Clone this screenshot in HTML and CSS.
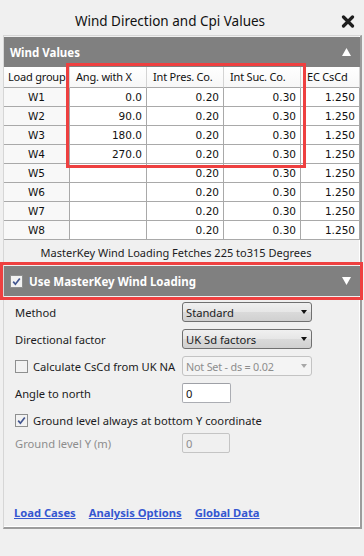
FILE: index.html
```html
<!DOCTYPE html>
<html lang="en">
<head>
    <meta charset="UTF-8">
    <meta name="viewport" content="width=device-width, initial-scale=1.0">
    <title>Wind Direction and Cpi Values</title>
    <link rel="stylesheet" href="styles.css">
</head>
<body>

<div class="titlebar">
    <h1>Wind Direction and Cpi Values</h1>
    <button class="close" title="Close">
        <svg width="14" height="13" viewBox="0 0 14 13"><path d="M2.5 2 L11.5 11 M11.5 2 L2.5 11" stroke="#1e1e1e" stroke-width="3.2" stroke-linecap="round"/></svg>
    </button>
</div>

<div class="panel">
    <div class="bar">
        <span>Wind Values</span>
        <svg width="9" height="8" viewBox="0 0 9 8"><path d="M4.5 0 L9 8 L0 8 Z" fill="#fff"/></svg>
    </div>

    <div class="grid-wrap">
        <table class="grid">
            <colgroup>
                <col class="c-group">
                <col class="c-val">
                <col class="c-val">
                <col class="c-val">
                <col class="c-ec">
            </colgroup>
            <thead>
                <tr>
                    <th>Load group</th>
                    <th>Ang. with X</th>
                    <th>Int Pres. Co.</th>
                    <th>Int Suc. Co.</th>
                    <th>EC CsCd</th>
                </tr>
            </thead>
            <tbody>
                <tr><td class="group">W1</td><td>0.0</td><td>0.20</td><td>0.30</td><td>1.250</td></tr>
                <tr><td class="group">W2</td><td>90.0</td><td>0.20</td><td>0.30</td><td>1.250</td></tr>
                <tr><td class="group">W3</td><td>180.0</td><td>0.20</td><td>0.30</td><td>1.250</td></tr>
                <tr><td class="group">W4</td><td>270.0</td><td>0.20</td><td>0.30</td><td>1.250</td></tr>
                <tr><td class="group">W5</td><td></td><td>0.20</td><td>0.30</td><td>1.250</td></tr>
                <tr><td class="group">W6</td><td></td><td>0.20</td><td>0.30</td><td>1.250</td></tr>
                <tr><td class="group">W7</td><td></td><td>0.20</td><td>0.30</td><td>1.250</td></tr>
                <tr><td class="group">W8</td><td></td><td>0.20</td><td>0.30</td><td>1.250</td></tr>
            </tbody>
        </table>
        <div class="mark mark-table"></div>
    </div>

    <p class="note">MasterKey Wind Loading Fetches 225 to315 Degrees</p>

    <div class="bar-wrap">
        <div class="bar">
            <span class="check-label">
                <svg class="check" width="13" height="13" viewBox="0 0 13 13"><rect x="0.5" y="0.5" width="12" height="12" fill="#f2f2f2" stroke="#8e8f8f"/><path d="M3.2 6.6 L5.4 9.2 L9.8 3.4" fill="none" stroke="#42558f" stroke-width="1.7"/></svg>
                Use MasterKey Wind Loading
            </span>
            <svg width="9" height="8" viewBox="0 0 9 8"><path d="M0 0 L9 0 L4.5 8 Z" fill="#fff"/></svg>
        </div>
        <div class="mark mark-bar"></div>
    </div>

    <div class="form">
        <div class="row">
            <span>Method</span>
            <div class="select"><span>Standard</span><i class="arrow"></i></div>
        </div>
        <div class="row">
            <span>Directional factor</span>
            <div class="select"><span>UK Sd factors</span><i class="arrow"></i></div>
        </div>
        <div class="row">
            <span class="check-label">
                <svg class="check" width="13" height="13" viewBox="0 0 13 13"><rect x="0.5" y="0.5" width="12" height="12" fill="#f2f2f2" stroke="#8e8f8f"/></svg>
                Calculate CsCd from UK NA
            </span>
            <div class="select disabled"><span>Not Set - ds = 0.02</span><i class="arrow"></i></div>
        </div>
        <div class="row">
            <span>Angle to north</span>
            <input class="field" type="text" value="0">
        </div>
        <div class="row">
            <span class="check-label wide">
                <svg class="check" width="13" height="13" viewBox="0 0 13 13"><rect x="0.5" y="0.5" width="12" height="12" fill="#f2f2f2" stroke="#8e8f8f"/><path d="M3.2 6.6 L5.4 9.2 L9.8 3.4" fill="none" stroke="#42558f" stroke-width="1.7"/></svg>
                Ground level always at bottom Y coordinate
            </span>
        </div>
        <div class="row tight">
            <span class="muted">Ground level Y (m)</span>
            <input class="field field-off" type="text" value="0" disabled>
        </div>
    </div>

    <div class="links">
        <a href="#">Load Cases</a>
        <a href="#">Analysis Options</a>
        <a href="#">Global Data</a>
    </div>
</div>

</body>
</html>
```

FILE: styles.css
```css
* {
    box-sizing: border-box;
    margin: 0;
    padding: 0;
}
body {
    font-family: "Noto Sans", "DejaVu Sans", sans-serif;
    font-size: 11.2px;
    color: #1b1b22;
    background-color: #f0f0f0;
    width: 364px;
    height: 556px;
    overflow: hidden;
}
.titlebar {
    height: 35px;
    display: flex;
    align-items: center;
    padding-top: 7px;
}
.titlebar h1 {
    flex: 1;
    text-align: center;
    font-size: 13.5px;
    font-weight: normal;
    color: #111;
}
.close {
    width: 24px;
    height: 14px;
    border: none;
    background: none;
    display: flex;
    align-items: center;
    justify-content: flex-start;
    padding-left: 1px;
}
.panel {
    margin-left: 3px;
    width: 359px;
    height: 494px;
    border-top: 1px solid #d6d6d6;
    border-left: 1px solid #d6d6d6;
    border-right: 2px solid #9c9c9c;
    border-bottom: 2px solid #9c9c9c;
    box-shadow: inset -1px -1px 0 #ffffff;
    padding-top: 1px;
    display: flex;
    flex-direction: column;
}
.bar {
    height: 30px;
    background-color: #808080;
    color: #ffffff;
    font-size: 11.5px;
    font-weight: bold;
    display: flex;
    align-items: center;
    justify-content: space-between;
    padding: 0 9px 0 6px;
}
.grid-wrap,
.bar-wrap {
    position: relative;
}
.grid {
    width: 356px;
    table-layout: fixed;
    border-collapse: separate;
    border-spacing: 0;
    font-family: "DejaVu Sans", sans-serif;
    font-size: 10.5px;
    color: #111;
}
.c-group { width: 66px; }
.c-val { width: 77px; }
.c-ec { width: 59px; }
.grid th {
    font-family: "Noto Sans", sans-serif;
    font-size: 11px;
    letter-spacing: -0.2px;
    font-weight: normal;
    text-align: left;
    line-height: 20px;
    padding: 0 0 0 6px;
    background: linear-gradient(#ffffff, #f7f7f7);
    border-bottom: 1px solid #a9a9a9;
    border-right: 1px solid #d4d4d4;
    white-space: nowrap;
    overflow: hidden;
}
.grid th:first-child {
    padding-left: 4px;
}
.grid td {
    line-height: 18px;
    text-align: right;
    padding: 0 4px 0 0;
    background-color: #ffffff;
    border-bottom: 1px solid #a9a9a9;
    border-right: 1px solid #a9a9a9;
}
.grid td.group {
    text-align: center;
    padding: 0;
    background-color: #f8f8f8;
}
.mark {
    position: absolute;
    border: 3px solid #ee4040;
    pointer-events: none;
}
.mark-table {
    left: 62px;
    top: -4px;
    width: 240px;
    height: 105px;
}
.mark-bar {
    left: -4px;
    top: -4px;
    width: 363px;
    height: 38px;
}
.note {
    height: 26px;
    line-height: 26px;
    text-align: center;
    padding-right: 12px;
    font-size: 11px;
}
.check-label {
    display: flex;
    align-items: center;
    gap: 5px;
}
.bar .check-label {
    gap: 6px;
}
.check {
    flex-shrink: 0;
}
.form {
    display: flex;
    flex-direction: column;
    padding: 6px 0 0 11px;
}
.row {
    height: 20px;
    display: grid;
    grid-template-columns: 167px auto;
    align-items: center;
    justify-items: start;
    margin-top: 7px;
}
.row:first-child {
    margin-top: 0;
}
.row.tight {
    margin-top: 3px;
}
.wide {
    grid-column: 1 / 3;
}
.muted {
    color: #8d8d8d;
}
.select {
    width: 130px;
    height: 20px;
    border: 1px solid #707070;
    border-radius: 3px;
    background: linear-gradient(#f0f0f0, #e6e6e6 50%, #dadada 51%, #d0d0d0);
    display: flex;
    align-items: center;
    justify-content: space-between;
    padding: 0 4px 0 3px;
}
.arrow {
    width: 0;
    height: 0;
    border-left: 3.5px solid transparent;
    border-right: 3.5px solid transparent;
    border-top: 4px solid #111;
}
.select.disabled {
    border-color: #c3c3c3;
    background: #f4f4f4;
    color: #8d8d8d;
    font-size: 10.8px;
    letter-spacing: -0.2px;
}
.select.disabled .arrow {
    border-top-color: #a7a7a7;
}
.field {
    width: 49px;
    height: 20px;
    border: 1px solid #abadb3;
    border-top-color: #9ea0a6;
    border-radius: 2px;
    background-color: #ffffff;
    font-family: "Noto Sans", sans-serif;
    font-size: 11.2px;
    color: #111;
    padding: 0 3px;
}
.field-off {
    width: 48px;
    background-color: #f0f0f0;
    border-color: #c4c4c4;
    color: #8d8d8d;
}
.links {
    margin-top: auto;
    display: flex;
    gap: 13px;
    padding: 0 0 6px 10px;
    line-height: 16px;
}
.links a {
    color: #3557d1;
    font-weight: bold;
    font-size: 11.2px;
}
```
